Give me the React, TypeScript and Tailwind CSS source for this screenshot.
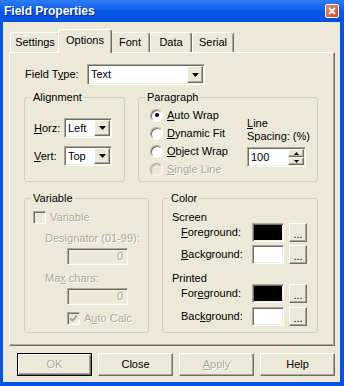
import React from 'react';

const sunken =
  'border border-t-[#ACA899] border-l-[#ACA899] border-b-white border-r-white shadow-[inset_1px_1px_0_#716F64,inset_-1px_-1px_0_#F1EFE2]';
const raised =
  'border border-t-white border-l-white border-b-[#716F64] border-r-[#716F64] shadow-[inset_-1px_-1px_0_#ACA899]';
const dim = 'text-[#ACA899] [text-shadow:1px_1px_0_#fff]';

function Arrow({ up = false, small = false }: { up?: boolean; small?: boolean }) {
  if (small) {
    return (
      <svg width="5" height="3" viewBox="0 0 5 3">
        <polygon points={up ? '0,3 5,3 2.5,0' : '0,0 5,0 2.5,3'} fill="#000" />
      </svg>
    );
  }
  return (
    <svg width="7" height="4" viewBox="0 0 7 4">
      <polygon points="0,0 7,0 3.5,4" fill="#000" />
    </svg>
  );
}

function Combo({ value, className }: { value: string; className: string }) {
  return (
    <div className={`${sunken} ${className} bg-white flex`}>
      <span className="flex-1 pl-[3px] self-center leading-[13px]">{value}</span>
      <span className={`${raised} m-[1px] w-[16px] bg-[#ECE9D8] flex items-center justify-center`}>
        <Arrow />
      </span>
    </div>
  );
}

function Group({ label, className, children }: { label: string; className: string; children: React.ReactNode }) {
  return (
    <div className={`relative border border-[#D0D0BF] rounded-[3px] ${className}`}>
      <span className="absolute -top-[7px] left-[6px] px-[2px] bg-[#ECE9D8] leading-[13px]">{label}</span>
      {children}
    </div>
  );
}

function Radio({ checked = false, disabled = false }: { checked?: boolean; disabled?: boolean }) {
  return (
    <span
      className={`w-[13px] h-[13px] shrink-0 rounded-full border border-t-[#ACA899] border-l-[#ACA899] border-b-white border-r-white shadow-[inset_1px_1px_0_#716F64] flex items-center justify-center ${
        disabled ? 'bg-[#ECE9D8] shadow-[inset_1px_1px_0_#C8C5B5]' : 'bg-white'
      }`}
    >
      {checked && <span className="w-[4px] h-[4px] rounded-full bg-black" />}
    </span>
  );
}

function Check({ checked = false }: { checked?: boolean }) {
  return (
    <span className={`${sunken} w-[13px] h-[13px] shrink-0 bg-[#ECE9D8] flex items-center justify-center`}>
      {checked && (
        <svg width="9" height="9" viewBox="0 0 9 9">
          <path d="M1 4 L3.5 6.5 L8 1.5" stroke="#ACA899" strokeWidth="2" fill="none" />
        </svg>
      )}
    </span>
  );
}

function Tab({ label, w, active = false }: { label: string; w: string; active?: boolean }) {
  return (
    <div
      className={`${w} flex items-center justify-center border-t border-l border-r border-t-white border-l-white border-r-[#716F64] rounded-t-[3px] shadow-[inset_-1px_0_0_#ACA899] bg-[#ECE9D8] ${
        active ? 'h-[24px] -mx-[2px] -mb-px relative z-10 pb-[3px]' : 'h-[20px]'
      }`}
    >
      {label}
    </div>
  );
}

function ColorRow({ label, fill, mt }: { label: React.ReactNode; fill: string; mt: string }) {
  return (
    <div className={`flex items-center h-[19px] ${mt}`}>
      <span className="pl-[18px] w-[89px]">{label}</span>
      <span className={`${sunken} ${fill} w-[32px] h-[19px]`} />
      <span className={`${raised} ml-[5px] w-[18px] h-[19px] bg-[#ECE9D8] flex items-end justify-center pb-[3px] leading-[8px]`}>
        ...
      </span>
    </div>
  );
}

function Button({ label, def = false, disabled = false }: { label: React.ReactNode; def?: boolean; disabled?: boolean }) {
  const inner = (
    <div className={`${raised} w-full h-full bg-[#ECE9D8] flex items-center justify-center ${disabled ? dim : ''}`}>
      {label}
    </div>
  );
  return <div className={`w-[75px] h-[23px] ${def ? 'border border-black' : ''}`}>{inner}</div>;
}

export default function App() {
  return (
    <div className="w-[344px] h-[386px] bg-[#0054E3] flex flex-col font-['Liberation_Sans',Arial,sans-serif] text-[11px] text-black">
      <div className="h-[22px] flex items-center justify-between pl-[4px] pr-[5px] bg-gradient-to-b from-[#2F7DF5] via-[#0559E8] to-[#0250E0]">
        <span className="text-white font-bold text-[12px] [text-shadow:1px_1px_0_#0A2A9C]">Field Properties</span>
        <div className="w-[14px] h-[14px] rounded-[2px] border border-white bg-gradient-to-br from-[#EC8A68] to-[#D2431A] flex items-center justify-center">
          <svg width="8" height="8" viewBox="0 0 8 8">
            <path d="M1 1 L7 7 M7 1 L1 7" stroke="#fff" strokeWidth="2" />
          </svg>
        </div>
      </div>

      <div className="flex-1 ml-[3px] mr-[4px] mb-[4px] bg-[#ECE9D8] flex flex-col">
        <div className="mt-[7px] ml-[7px] h-[23px] flex items-end relative z-10">
          <Tab label="Settings" w="w-[50px]" />
          <Tab label="Options" w="w-[54px]" active />
          <Tab label="Font" w="w-[40px]" />
          <Tab label="Data" w="w-[42px]" />
          <Tab label="Serial" w="w-[42px]" />
        </div>

        <div className="ml-[6px] w-[326px] h-[294px] border border-t-white border-l-white border-b-[#716F64] border-r-[#716F64] shadow-[inset_-1px_-1px_0_#ACA899] flex flex-col">
          <div className="mt-[11px] pl-[15px] flex items-center">
            <span className="w-[62px]">
              Field T<u>y</u>pe:
            </span>
            <Combo value="Text" className="w-[118px] h-[21px]" />
          </div>

          <div className="mt-[12px] pl-[14px] flex gap-[13px]">
            <Group label="Alignment" className="w-[101px] h-[85px]">
              <div className="mt-[20px] pl-[9px] flex items-center">
                <span className="w-[30px]">
                  <u>H</u>orz:
                </span>
                <Combo value="Left" className="w-[48px] h-[20px]" />
              </div>
              <div className="mt-[8px] pl-[9px] flex items-center">
                <span className="w-[30px]">
                  <u>V</u>ert:
                </span>
                <Combo value="Top" className="w-[48px] h-[20px]" />
              </div>
            </Group>

            <Group label="Paragraph" className="w-[180px] h-[85px] flex">
              <div className="w-[108px] pl-[11px] pt-[8px]">
                <div className="h-[18px] flex items-center gap-[4px]">
                  <Radio checked />
                  <span>
                    <u>A</u>uto Wrap
                  </span>
                </div>
                <div className="h-[18px] flex items-center gap-[4px]">
                  <Radio />
                  <span>
                    <u>D</u>ynamic Fit
                  </span>
                </div>
                <div className="h-[18px] flex items-center gap-[4px]">
                  <Radio />
                  <span>
                    <u>O</u>bject Wrap
                  </span>
                </div>
                <div className="h-[18px] flex items-center gap-[4px]">
                  <Radio disabled />
                  <span className={dim}>
                    <u>S</u>ingle Line
                  </span>
                </div>
              </div>
              <div className="pt-[19px] leading-[13px]">
                <div>
                  <u>L</u>ine
                </div>
                <div>Spacing: (%)</div>
                <div className={`${sunken} mt-[4px] w-[59px] h-[20px] bg-white flex`}>
                  <span className="flex-1 pl-[3px] self-center">100</span>
                  <div className="m-[1px] w-[16px] flex flex-col">
                    <span className={`${raised} h-[8px] bg-[#ECE9D8] flex items-center justify-center`}>
                      <Arrow up small />
                    </span>
                    <span className={`${raised} h-[8px] bg-[#ECE9D8] flex items-center justify-center`}>
                      <Arrow small />
                    </span>
                  </div>
                </div>
              </div>
            </Group>
          </div>

          <div className="mt-[16px] pl-[14px] flex gap-[13px]">
            <Group label="Variable" className="w-[125px] h-[135px]">
              <div className="mt-[12px] pl-[8px] h-[13px] flex items-center gap-[4px]">
                <Check />
                <span className={dim}>Variable</span>
              </div>
              <div className={`mt-[8px] pl-[20px] leading-[13px] ${dim}`}>
                Desi<u>g</u>nator (01-99):
              </div>
              <div className={`${sunken} mt-[3px] ml-[42px] w-[61px] h-[17px] bg-[#ECE9D8] flex items-center justify-end pr-[4px] ${dim}`}>
                0
              </div>
              <div className={`mt-[7px] pl-[20px] leading-[13px] ${dim}`}>
                Ma<u>x</u> chars:
              </div>
              <div className={`${sunken} mt-[3px] ml-[42px] w-[61px] h-[17px] bg-[#ECE9D8] flex items-center justify-end pr-[4px] ${dim}`}>
                0
              </div>
              <div className="mt-[7px] pl-[42px] h-[13px] flex items-center gap-[4px]">
                <Check checked />
                <span className={dim}>
                  A<u>u</u>to Calc
                </span>
              </div>
            </Group>

            <Group label="Color" className="w-[156px] h-[135px]">
              <div className="mt-[12px] pl-[9px] leading-[12px]">Screen</div>
              <ColorRow
                label={
                  <>
                    <u>F</u>oreground:
                  </>
                }
                fill="bg-black"
                mt="mt-0"
              />
              <ColorRow
                label={
                  <>
                    <u>B</u>ackground:
                  </>
                }
                fill="bg-white"
                mt="mt-[3px]"
              />
              <div className="mt-[8px] pl-[9px] leading-[12px]">Printed</div>
              <ColorRow
                label={
                  <>
                    For<u>e</u>ground:
                  </>
                }
                fill="bg-black"
                mt="mt-0"
              />
              <ColorRow
                label={
                  <>
                    Bac<u>k</u>ground:
                  </>
                }
                fill="bg-white"
                mt="mt-[4px]"
              />
            </Group>
          </div>
        </div>

        <div className="mt-[7px] ml-[14px] flex gap-[6px]">
          <Button label="OK" def disabled />
          <Button label="Close" />
          <Button
            label={
              <>
                <u>A</u>pply
              </>
            }
            disabled
          />
          <Button label="Help" />
        </div>
      </div>
    </div>
  );
}
